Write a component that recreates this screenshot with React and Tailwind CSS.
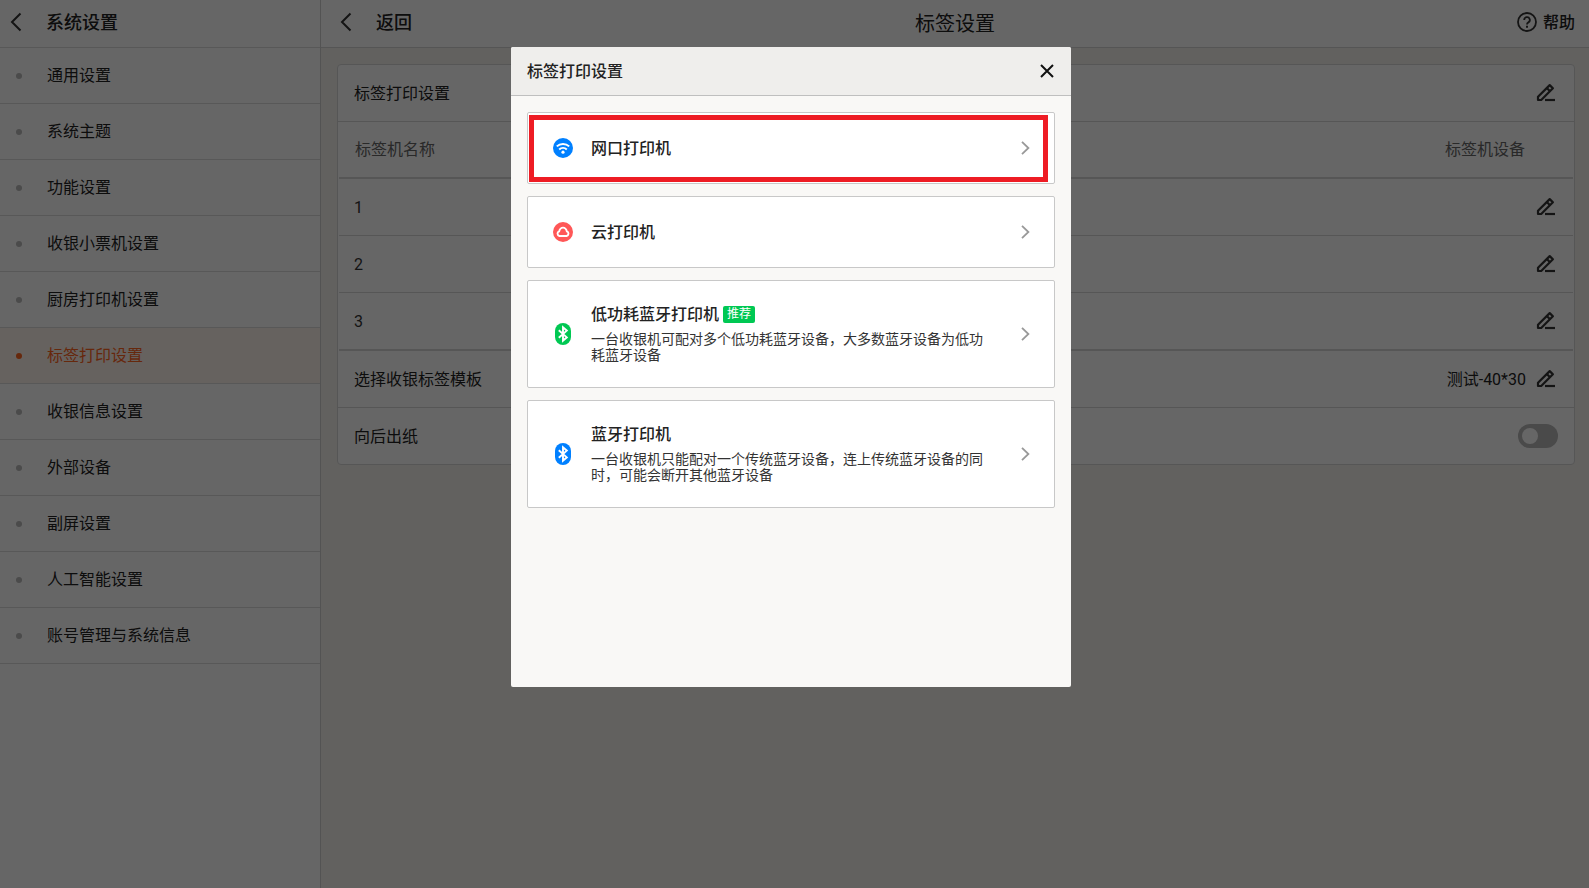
import React, { useState } from "react";

const menuItems = [
  "通用设置",
  "系统主题",
  "功能设置",
  "收银小票机设置",
  "厨房打印机设置",
  "标签打印设置",
  "收银信息设置",
  "外部设备",
  "副屏设置",
  "人工智能设置",
  "账号管理与系统信息",
];

const printerTypes = [
  { id: "network", name: "网口打印机", icon: "wifi", highlight: true },
  { id: "cloud", name: "云打印机", icon: "cloud" },
  {
    id: "ble",
    name: "低功耗蓝牙打印机",
    icon: "ble",
    tag: "推荐",
    desc: "一台收银机可配对多个低功耗蓝牙设备，大多数蓝牙设备为低功耗蓝牙设备",
  },
  {
    id: "bluetooth",
    name: "蓝牙打印机",
    icon: "bluetooth",
    desc: "一台收银机只能配对一个传统蓝牙设备，连上传统蓝牙设备的同时，可能会断开其他蓝牙设备",
  },
];

const BackIcon = () => (
  <svg width="12" height="20" viewBox="0 0 12 20" fill="none" stroke="#333" strokeWidth="2">
    <path d="M10.5 1.5 2 10l8.5 8.5" />
  </svg>
);

const EditIcon = () => (
  <svg width="24" height="24" viewBox="0 0 24 24" fill="none" stroke="#333" strokeWidth="2.2">
    <path d="M4 19v-3.2L15.7 4.1l3.2 3.2L7.2 19z" strokeLinejoin="round" />
    <path d="m12.8 7 3.2 3.2" />
    <path d="M11 19h10" />
  </svg>
);

const HelpIcon = () => (
  <svg width="20" height="20" viewBox="0 0 20 20" fill="none" stroke="#333" strokeWidth="1.8">
    <circle cx="10" cy="10" r="9" />
    <path d="M7.2 8a2.8 2.8 0 1 1 4.2 2.4c-.9.5-1.4 1-1.4 2.2" />
    <path d="M9 14.8h2" strokeWidth="2" />
  </svg>
);

const ArrowIcon = () => (
  <svg width="9" height="14" viewBox="0 0 9 14" fill="none" stroke="#999" strokeWidth="1.8">
    <path d="m1 .8 6.4 6.2L1 13.2" />
  </svg>
);

const BluetoothIcon = ({ color }) => (
  <svg width="20" height="24" viewBox="0 0 20 24" fill="none">
    <rect x="2" y="1" width="16" height="22" rx="8" fill={color} />
    <path
      d="m5.8 8.2 8 7.2-3.8 3.2V5.4l3.8 3.2-8 7.2"
      stroke="#fff"
      strokeWidth="1.9"
    />
  </svg>
);

const PrinterIcon = ({ type }) => {
  if (type === "wifi") {
    return (
      <svg width="20" height="20" viewBox="0 0 20 20" fill="none" stroke="#fff" strokeWidth="2">
        <circle cx="10" cy="10" r="10" fill="#0080ff" stroke="none" />
        <path d="M3.8 8.4a9 9 0 0 1 12.4 0" />
        <path d="M6.2 11.4a5.6 5.6 0 0 1 7.6 0" />
        <circle cx="10" cy="14.2" r="1.6" fill="#fff" stroke="none" />
      </svg>
    );
  }
  if (type === "cloud") {
    return (
      <svg width="20" height="20" viewBox="0 0 20 20" fill="none" stroke="#fff" strokeWidth="1.9">
        <circle cx="10" cy="10" r="10" fill="#ff5757" stroke="none" />
        <path d="M6.4 14a2.4 2.4 0 0 1-.3-4.6C6.7 7.2 8.2 5.6 10 5.6s3.3 1.6 3.9 3.8a2.4 2.4 0 0 1-.3 4.6z" />
      </svg>
    );
  }
  return <BluetoothIcon color={type === "ble" ? "#00c853" : "#0080ff"} />;
};

const Sidebar = () => {
  const [active, setActive] = useState("标签打印设置");

  return (
    <aside className="w-[321px] shrink-0 border-r border-[#cfcfcf] bg-white">
      <div className="flex h-12 items-center border-b border-[#dcdcdc] pb-[3px] pl-[10px]">
        <button aria-label="返回上一级">
          <BackIcon />
        </button>
        <h1 className="pl-6 text-lg leading-[27px] font-medium">系统设置</h1>
      </div>
      <nav>
        {menuItems.map((item) => (
          <button
            key={item}
            onClick={() => setActive(item)}
            className={`flex h-14 w-full items-center border-b border-[#dcdcdc] pl-4 text-left ${
              item === active ? "bg-[#fff5ed] text-[#ff641f]" : "bg-white"
            }`}
          >
            <span
              className={`mr-[25px] size-[6px] rounded-full ${
                item === active ? "bg-[#ff641f]" : "bg-[#bbb]"
              }`}
            />
            {item}
          </button>
        ))}
      </nav>
    </aside>
  );
};

const LabelSettings = () => {
  const [backFeed, setBackFeed] = useState(false);

  return (
    <main className="flex min-w-0 flex-1 flex-col bg-[#f5f2ed]">
      <header className="grid h-12 grid-cols-[1fr_auto_1fr] items-center border-b border-[#d4d4d4] bg-white px-[14px] pb-[3px]">
        <button className="flex items-center gap-6 justify-self-start pl-[5px] text-lg leading-[27px] font-medium">
          <BackIcon />
          返回
        </button>
        <h2 className="text-xl leading-[normal]">标签设置</h2>
        <button className="flex items-center gap-[6px] justify-self-end font-medium">
          <HelpIcon />
          帮助
        </button>
      </header>

      <section className="mt-4 mr-[14px] ml-4 rounded-sm border border-[#d8d8d8] bg-white">
        <div className="flex h-[57px] items-center justify-between border-b border-[#d8d8d8] px-4">
          标签打印设置
          <button aria-label="编辑标签打印设置">
            <EditIcon />
          </button>
        </div>

        <div className="px-px">
          <table className="w-full border-separate border-spacing-0">
            <thead>
              <tr className="text-[#666]">
                <th className="h-[57px] border-b-2 border-[#d8d8d8] pl-4 text-left font-normal">
                  标签机名称
                </th>
                <th className="h-[57px] border-b-2 border-[#d8d8d8] pr-12 text-right font-normal">
                  标签机设备
                </th>
              </tr>
            </thead>
            <tbody>
              {[1, 2, 3].map((no) => (
                <tr
                  key={no}
                  className="text-[#333] [&:last-child>td]:h-[58px] [&:last-child>td]:border-b-2"
                >
                  <td className="h-[57px] border-b border-[#d8d8d8] pl-[15px]">{no}</td>
                  <td className="h-[57px] border-b border-[#d8d8d8] pr-[15px]">
                    <button aria-label={`编辑标签机${no}`} className="ml-auto block">
                      <EditIcon />
                    </button>
                  </td>
                </tr>
              ))}
            </tbody>
          </table>
        </div>

        <div className="flex h-[57px] items-center border-b border-[#d8d8d8] px-4">
          选择收银标签模板
          <span className="mr-2 ml-auto">测试-40*30</span>
          <button aria-label="编辑收银标签模板">
            <EditIcon />
          </button>
        </div>

        <label className="flex h-14 items-center justify-between px-4">
          向后出纸
          <input
            type="checkbox"
            role="switch"
            checked={backFeed}
            onChange={(e) => setBackFeed(e.target.checked)}
            className="h-6 w-10 appearance-none rounded-full bg-[#b8b8b8] p-1 before:block before:size-4 before:rounded-full before:bg-white checked:bg-[#ff641f] checked:before:ml-4"
          />
        </label>
      </section>
    </main>
  );
};

const PrinterDialog = ({ onClose }) => (
  <div className="fixed inset-0 flex items-start justify-center bg-black/60 pt-[47px] pr-[7px]">
    <div
      role="dialog"
      aria-modal="true"
      aria-labelledby="printer-dialog-title"
      className="h-[640px] w-[560px] overflow-hidden rounded-xs bg-[#f9f8f6]"
    >
      <div className="flex h-[49px] items-center justify-between border-b border-[#bfbfbf] bg-[#efeeec] px-4">
        <h2 id="printer-dialog-title" className="font-medium">
          标签打印设置
        </h2>
        <button aria-label="关闭" onClick={onClose}>
          <svg width="16" height="16" viewBox="0 0 16 16" stroke="#111" strokeWidth="2">
            <path d="m2 2 12 12M14 2 2 14" />
          </svg>
        </button>
      </div>

      <div className="flex flex-col gap-3 p-4">
        {printerTypes.map((printer) => (
          <button
            key={printer.id}
            className={`relative flex items-center rounded-xs border border-[#c8c8c8] bg-white pr-6 pl-[25px] text-left ${
              printer.desc ? "h-[108px]" : "h-[72px]"
            }`}
          >
            <PrinterIcon type={printer.icon} />
            <span className={`ml-[18px] w-[400px] ${printer.desc ? "pb-1" : ""}`}>
              <span className="flex items-center gap-1 font-medium">
                {printer.name}
                {printer.tag && (
                  <span className="rounded-xs bg-[#00c853] px-1 text-xs leading-[17px] font-normal text-white">
                    {printer.tag}
                  </span>
                )}
              </span>
              {printer.desc && (
                <span className="mt-1 block text-sm leading-4 text-[#333]">{printer.desc}</span>
              )}
            </span>
            <span className="ml-auto">
              <ArrowIcon />
            </span>
            {printer.highlight && (
              <span className="absolute top-[2px] right-[6px] bottom-px left-px border-5 border-[#ee1c24]" />
            )}
          </button>
        ))}
      </div>
    </div>
  </div>
);

const App = () => {
  const [open, setOpen] = useState(true);

  return (
    <div className="flex min-h-screen font-[Roboto,'Noto_Sans_CJK_SC',sans-serif] text-base leading-[25px] text-[#222]">
      <Sidebar />
      <LabelSettings />
      {open && <PrinterDialog onClose={() => setOpen(false)} />}
    </div>
  );
};

export default App;
